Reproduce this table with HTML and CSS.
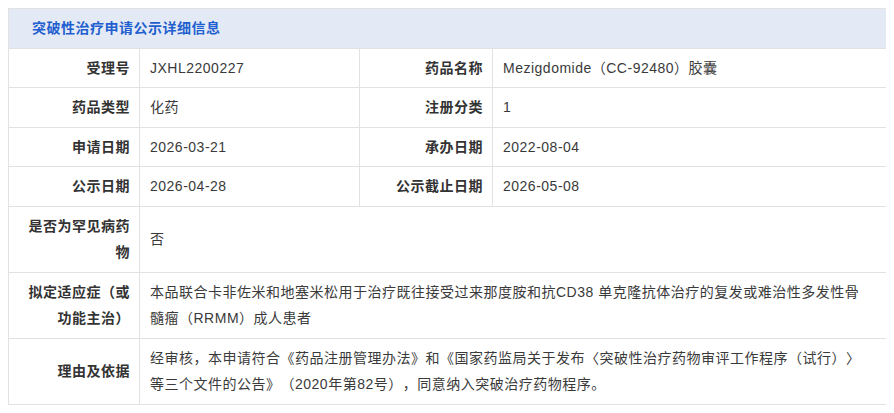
FILE: index.html
```html
<!DOCTYPE html>
<html lang="zh-CN">
<head>
<meta charset="utf-8">
<title>突破性治疗申请公示详细信息</title>
<link rel="stylesheet" href="styles.css">
</head>
<body>
<table class="detail">
  <colgroup>
    <col class="c-label1">
    <col class="c-value1">
    <col class="c-label2">
    <col class="c-value2">
  </colgroup>
  <thead>
    <tr><th colspan="4" class="title">突破性治疗申请公示详细信息</th></tr>
  </thead>
  <tbody>
    <tr>
      <td class="label">受理号</td><td class="value">JXHL2200227</td>
      <td class="label">药品名称</td><td class="value">Mezigdomide（CC-92480）胶囊</td>
    </tr>
    <tr>
      <td class="label">药品类型</td><td class="value">化药</td>
      <td class="label">注册分类</td><td class="value">1</td>
    </tr>
    <tr>
      <td class="label">申请日期</td><td class="value">2026-03-21</td>
      <td class="label">承办日期</td><td class="value">2022-08-04</td>
    </tr>
    <tr>
      <td class="label">公示日期</td><td class="value">2026-04-28</td>
      <td class="label">公示截止日期</td><td class="value">2026-05-08</td>
    </tr>
    <tr>
      <td class="label">是否为罕见病药物</td><td class="value" colspan="3">否</td>
    </tr>
    <tr>
      <td class="label">拟定适应症（或功能主治）</td>
      <td class="value" colspan="3">本品联合卡非佐米和地塞米松用于治疗既往接受过来那度胺和抗CD38 单克隆抗体治疗的复发或难治性多发性骨髓瘤（RRMM）成人患者</td>
    </tr>
    <tr>
      <td class="label">理由及依据</td>
      <td class="value" colspan="3">经审核，本申请符合《药品注册管理办法》和《国家药监局关于发布〈突破性治疗药物审评工作程序（试行）〉等三个文件的公告》（2020年第82号），同意纳入突破治疗药物程序。</td>
    </tr>
  </tbody>
</table>
</body>
</html>
```

FILE: styles.css
```css
html, body {
  background: #ffffff;
}
body {
  margin: 8px;
  font-family: "Liberation Sans", "Noto Sans CJK SC", sans-serif;
  font-size: 14px;
  letter-spacing: 0.5px;
  color: #333333;
  text-spacing-trim: space-all;
}
.detail {
  width: 879px;
  border-collapse: collapse;
  table-layout: fixed;
}
.c-label1 { width: 131px; }
.c-value1 { width: 220px; }
.c-label2 { width: 133px; }
.c-value2 { width: auto; }
.detail th,
.detail td {
  border: 1px solid #e2e2e2;
  line-height: 26.5px;
  padding: 6px 10px;
  vertical-align: middle;
}
.detail .title {
  background: #e4eaf5;
  color: #1f5fcf;
  font-weight: bold;
  text-align: left;
  padding: 6px 10px 6px 23px;
  font-size: 14px;
}
.detail .label {
  text-align: right;
  font-weight: bold;
  color: #333333;
  padding-right: 9px;
}
.detail .value {
  text-align: left;
  color: #3a3a3a;
  padding-right: 18px;
}
```
